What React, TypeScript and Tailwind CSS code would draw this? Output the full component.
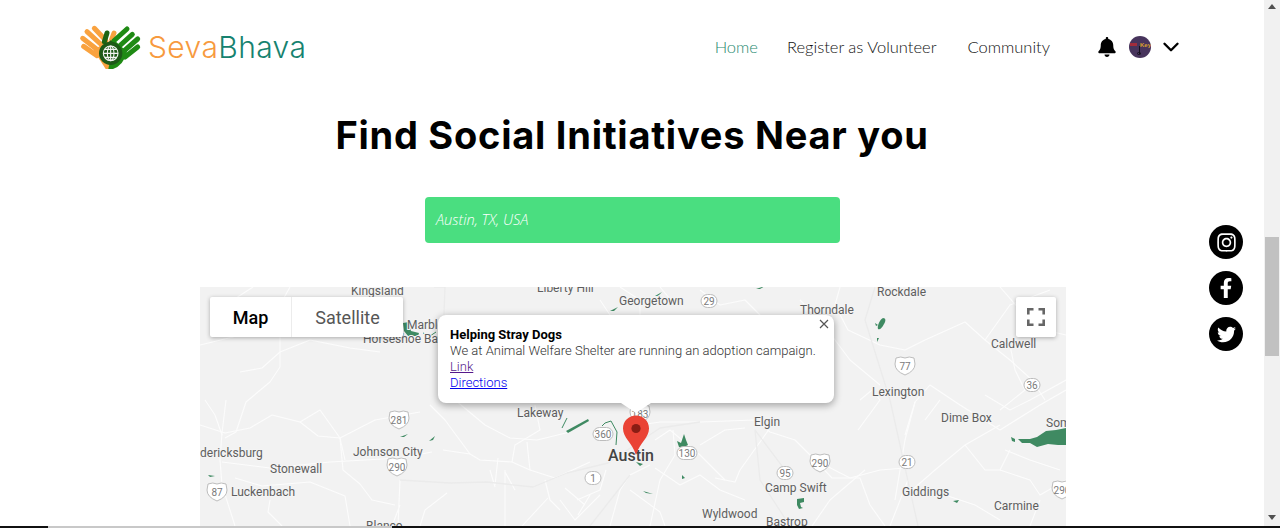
import React from "react";
import { FaInstagram, FaFacebookF, FaTwitter, FaBell } from "react-icons/fa";
import { ChevronDown } from "lucide-react";

function Logo() {
  const orange = "#f9a23f";
  const green = "#1f8a14";
  return (
    <svg width="70" height="50" viewBox="0 0 210 150" className="shrink-0 -ml-[6px] mr-[3px] -translate-y-[1px]">
      <g stroke={orange} strokeWidth="15" strokeLinecap="round" fill="none">
        <path d="M58 22 L92 58" />
        <path d="M36 32 L80 72" />
        <path d="M23 52 L72 90" />
        <path d="M26 76 L66 104" />
        <path d="M117 36 L110 55" />
      </g>
      <path d="M56 88 L100 58 L112 144 L92 144 Z" fill={orange} />
      <g stroke={green} strokeWidth="15" strokeLinecap="round" fill="none">
        <path d="M156 24 L116 60" />
        <path d="M172 40 L130 78" />
        <path d="M188 54 L142 94" />
        <path d="M188 78 L150 108" />
      </g>
      <path d="M156 92 L118 58 L100 144 L114 144 Q146 132 156 92 Z" fill={green} />
      <path d="M96 36 L88 62" stroke="#1e6414" strokeWidth="15" strokeLinecap="round" />
      <circle cx="107" cy="97" r="35" fill="#1e5a18" />
      <path d="M107 58 L82 78 L132 78 Z" fill="#1e5a18" />
      <g stroke="#f4f4f4" strokeWidth="3.4" fill="none">
        <circle cx="107" cy="97" r="22" />
        <ellipse cx="107" cy="97" rx="10" ry="22" />
        <path d="M107 75 V119 M85 97 H129 M89 85 H125 M89 109 H125" />
      </g>
    </svg>
  );
}

function Avatar() {
  return (
    <div className="relative ml-[12px] h-[22px] w-[22px] overflow-hidden rounded-full bg-[#47345c]">
      <span className="absolute left-[1px] top-[7px] h-[3px] w-[7px] bg-[#a12c3c]" />
      <span className="absolute left-[11px] top-[6px] font-['Liberation_Sans',sans-serif] text-[6px] font-bold leading-[7px] text-[#d9a02e]">
        Key
      </span>
      <span className="absolute left-[10px] top-[10px] h-[8px] w-[1px] bg-[#15101c]" />
      <span className="absolute left-[8px] top-[16px] h-[3px] w-[4px] rounded-full border border-[#15101c]" />
    </div>
  );
}

function Header() {
  return (
    <header className="flex h-[94px] shrink-0 items-center justify-between pl-[81px] pr-[80px]">
      <div className="flex items-center">
        <Logo />
        <span className="font-['Inter',sans-serif] text-[30px] font-light leading-none tracking-[0.4px]">
          <span className="text-[#f79a3e]">Seva</span>
          <span className="text-[#16826f]">Bhava</span>
        </span>
      </div>
      <nav className="flex items-center font-['Lato',sans-serif] text-[16.5px] font-light text-[#111]">
        <a className="text-[#1f8a70]">Home</a>
        <a className="ml-[29px]">Register as Volunteer</a>
        <a className="ml-[31px]">Community</a>
        <FaBell className="ml-[47px] text-[20px] text-black" />
        <Avatar />
        <ChevronDown className="ml-[7px] h-[26px] w-[26px] text-black" strokeWidth={2.2} />
      </nav>
    </header>
  );
}

const roads = [
  "M200 345 L233 337 L246 331 L262 318 L280 305 L290 287",
  "M233 300 L253 287",
  "M280 337 L280 367 L270 382 L246 402 L236 432 L225 438",
  "M240 372 L262 368 L280 352 L310 340 L350 348 L380 352",
  "M200 425 L225 433 L250 428 L272 415 L300 422 L320 410 L340 438 L345 460",
  "M226 400 L222 433 L220 460 L222 485 L235 526",
  "M205 400 L215 415 L222 435",
  "M300 422 L318 436 L340 438 L375 420 L420 412",
  "M340 438 L343 470 L360 484 L372 500 L395 505",
  "M222 462 L270 468 L330 462 L400 458 L432 452",
  "M235 478 L262 486 L310 482 L345 496 L350 526",
  "M270 500 L268 512 L282 526",
  "M400 505 L392 526 M400 480 L398 526",
  "M447 493 L425 510 L420 526",
  "M505 470 L505 526",
  "M545 480 L550 500 L560 510 M548 498 L522 526",
  "M565 488 L585 505 M578 515 L590 495",
  "M443 450 L470 454 L480 460 L512 462 L530 470 L555 478 L590 462",
  "M470 454 L445 420 L430 405",
  "M512 462 L515 445 L540 430 L535 405",
  "M530 470 L528 452 L527 442 M498 458 L495 485",
  "M455 400 L485 425 L510 438 L537 440 L570 432",
  "M490 470 L495 487 M505 472 L515 490",
  "M620 287 L640 300 L640 315 M660 287 L675 305",
  "M600 300 L612 318 M700 290 L720 305 L745 300 L760 315",
  "M840 287 L835 305 L848 330 L880 345 L905 350 L925 340",
  "M800 300 L820 320 L850 360 L880 385",
  "M925 340 L965 322 L985 340 L1010 360 L1032 380 L1045 400",
  "M1000 287 L1020 310 L1045 330 L1066 335",
  "M985 340 L1010 305 L1050 290",
  "M1010 345 L1015 370 L1025 390 L1000 410",
  "M985 395 L1010 410 L1030 400 L1066 380",
  "M640 425 L660 422 L700 422 L755 420 L770 432 L795 440 L815 460 L850 478 L880 470 L905 468",
  "M770 428 L740 470 L735 482 L715 478",
  "M655 440 L670 430 L700 455 L715 470 L725 480",
  "M700 445 L725 430 L745 428",
  "M655 468 L680 485 L700 475 L720 490 L745 500",
  "M673 430 L675 455 L660 480 L650 526",
  "M815 460 L832 478 L860 478 L870 505 L885 526",
  "M865 470 L830 500 L812 526",
  "M908 480 L890 526",
  "M905 435 L915 402 L930 385 L960 405 L1000 430 L1040 405 L1066 390",
  "M915 402 L905 440 L895 500",
  "M912 490 L935 470 L965 445 L1000 425",
  "M945 495 L975 505 L1000 520 M1000 470 L1030 480 L1040 495 L1066 480",
  "M1005 450 L1030 460 L1060 470",
  "M1040 500 L1030 526",
  "M965 445 L985 470 L1000 470 L1010 450",
  "M858 430 L880 400 L872 390 L860 400",
  "M925 420 L940 400",
  "M610 526 L620 490 L630 475 L650 465",
  "M577 500 L600 490 L606 470",
  "M630 490 L660 512 L665 526",
  "M560 500 L575 520 L600 495",
];

const highways = [
  "M400 480 L450 483 L487 482 L533 487 L567 473 L608 463 L660 428 L700 422",
  "M434 287 L445 287 L443 340 L445 400",
  "M875 287 L865 320 L890 400 L918 526",
  "M630 475 L590 526",
  "M785 470 L755 430 L760 480 L790 526",
];

const parks = [
  "M403 323 L409 322 L411 331 L419 333 L418 336 L408 336 L404 331 Z",
  "M883 318 C886 318 886 321 884 324 C882 328 880 330 878 329 C877 326 880 319 883 318 Z",
  "M875 323 L878 325 L876 326 Z",
  "M877 338 L879 338 L877 342 Z",
  "M1018 439 L1030 439 L1037 437 L1046 431 L1056 430 L1066 428 L1066 445 L1058 445 L1048 444 L1037 447 L1030 443 L1022 443 Z",
  "M1011 437 L1015 439 L1015 442 L1012 441 Z",
  "M677 441 L681 443 L684 434 L686 440 L688 445 L684 447 L679 447 Z",
  "M797 499 L804 498 L804 502 L800 503 L801 507 L803 508 L799 509 L797 505 Z",
  "M682 475 L685 478 L682 479 Z",
  "M953 501 L959 500 L957 503 Z",
  "M400 437 L408 434 L404 437 Z",
  "M429 441 L435 436 L433 440 Z",
  "M208 475 L215 476 L210 477 Z",
  "M643 491 L653 494 L646 493 Z",
  "M636 462 L643 464 L640 466 Z",
  "M566 431 L588 419 L589 421 L568 433 Z",
  "M655 296 L662 292 L658 296 Z",
  "M756 289 L765 286 L760 289 Z",
  "M610 311 L618 307 L614 311 Z",
];

const parkLines = [
  "M562 428 L567 418",
  "M602 426 L605 423 L611 421 L617 432 L616 445",
  "M423 333 L430 336 L436 332",
];

const labels: [string, number, number][] = [
  ["Kingsland", 351, 295],
  ["Liberty Hill", 537, 292],
  ["Georgetown", 619, 305],
  ["Thorndale", 800, 314],
  ["Rockdale", 877, 296],
  ["Caldwell", 991, 348],
  ["Lexington", 872, 396],
  ["Dime Box", 941, 422],
  ["Som", 1046, 427],
  ["Elgin", 754, 426],
  ["Camp Swift", 765, 492],
  ["Giddings", 902, 496],
  ["Carmine", 994, 510],
  ["Wyldwood", 702, 518],
  ["Bastrop", 766, 526],
  ["Lakeway", 517, 417],
  ["Johnson City", 353, 456],
  ["dericksburg", 200, 457],
  ["Stonewall", 270, 473],
  ["Luckenbach", 231, 496],
  ["Blanco", 366, 530],
  ["Marble", 407, 329],
  ["Horseshoe Bay", 363, 343],
];

const usShields: [string, number, number][] = [
  ["183", 640, 414],
  ["281", 399, 420],
  ["290", 397, 467],
  ["87", 217, 492],
  ["77", 905, 366],
  ["290", 820, 463],
  ["290", 1062, 490],
];

const pills: [string, number, number, number][] = [
  ["29", 709, 301, 16],
  ["36", 1032, 385, 16],
  ["130", 687, 453, 20],
  ["95", 785, 473, 16],
  ["21", 907, 462, 16],
  ["360", 603, 434, 20],
  ["1", 593, 478, 16],
];

function MapCanvas() {
  return (
    <svg viewBox="200 287 866 239" className="block h-full w-full font-['Roboto',sans-serif]">
      <g fill="none" stroke="#fcfcfc" strokeWidth="1.1" strokeLinejoin="round">
        {roads.map((d, i) => (
          <path key={i} d={d} />
        ))}
      </g>
      <g fill="none" stroke="#ebebeb" strokeWidth="1.3" strokeLinejoin="round">
        {highways.map((d, i) => (
          <path key={i} d={d} />
        ))}
      </g>
      <g fill="#3f8a62">
        {parks.map((d, i) => (
          <path key={i} d={d} />
        ))}
      </g>
      <g fill="none" stroke="#3f8a62" strokeWidth="1">
        {parkLines.map((d, i) => (
          <path key={i} d={d} />
        ))}
      </g>
      {labels.map(([t, x, y]) => (
        <text key={t} x={x} y={y} fontSize="12" fill="#5e5e5e" stroke="#f4f4f4" strokeWidth="2" className="[paint-order:stroke]">
          {t}
        </text>
      ))}
      <text x="608" y="461" fontSize="16" fontWeight="500" fill="#444" stroke="#f4f4f4" strokeWidth="2" className="[paint-order:stroke]">
        Austin
      </text>
      {usShields.map(([t, x, y]) => (
        <g key={t + x} transform={`translate(${x} ${y})`}>
          <path d="M-9 -8 Q-4 -10 0 -8 Q4 -10 9 -8 L10 -2 Q10 5 0 9 Q-10 5 -10 -2 Z" fill="#fff" stroke="#bdbdbd" strokeWidth="1" />
          <text textAnchor="middle" y="3.5" fontSize="10" fill="#7a7a7a">
            {t}
          </text>
        </g>
      ))}
      {pills.map(([t, x, y, w]) => (
        <g key={t}>
          <rect x={x - w / 2} y={y - 6.5} width={w} height="13" rx="6.5" fill="#fff" stroke="#bdbdbd" strokeWidth="1" />
          <text x={x} y={y + 3.5} textAnchor="middle" fontSize="10" fill="#7a7a7a">
            {t}
          </text>
        </g>
      ))}
      <path d="M636 415.5 C628.8 415.5 623 421 623 428.5 C623 438 632 442 636 455 C640 442 649 438 649 428.5 C649 421 643.2 415.5 636 415.5 Z" fill="#ea4335" />
      <circle cx="636" cy="428.5" r="4.6" fill="#8a1d14" />
    </svg>
  );
}

function MapTabs() {
  return (
    <div className="absolute left-[10px] top-[10px] flex h-[40px] rounded-[2px] bg-white font-['Roboto',sans-serif] text-[18px] shadow-[0_1px_4px_rgba(0,0,0,0.3)]">
      <div className="flex w-[82px] items-center justify-center border-r border-[#ececec] font-medium text-black">Map</div>
      <div className="flex w-[111px] items-center justify-center text-[#565656]">Satellite</div>
    </div>
  );
}

function FullscreenButton() {
  return (
    <div className="absolute right-[10px] top-[10px] flex h-[40px] w-[40px] items-center justify-center rounded-[2px] bg-white shadow-[0_1px_4px_rgba(0,0,0,0.3)]">
      <svg width="18" height="18" viewBox="0 0 18 18" fill="none" stroke="#666" strokeWidth="2.6">
        <path d="M1.3 6.5V1.3H6.5 M11.5 1.3H16.7V6.5 M16.7 11.5V16.7H11.5 M6.5 16.7H1.3V11.5" />
      </svg>
    </div>
  );
}

function InfoWindow() {
  return (
    <div className="absolute left-[238px] top-[28px] h-[88px] w-[396px] rounded-[8px] bg-white pl-[12px] pt-[12px] font-['Roboto',sans-serif] text-[13px] leading-[16px] shadow-[0_2px_7px_1px_rgba(0,0,0,0.3)]">
      <div className="font-bold text-black">Helping Stray Dogs</div>
      <div className="whitespace-nowrap font-light text-[#333]">We at Animal Welfare Shelter are running an adoption campaign.</div>
      <a className="block font-light text-[#551a8b] underline">Link</a>
      <a className="block font-light text-[#0000ee] underline">Directions</a>
      <svg width="10" height="10" viewBox="0 0 10 10" className="absolute right-[5px] top-[4px]" stroke="#555" strokeWidth="1.2">
        <path d="M1 1 L9 9 M9 1 L1 9" />
      </svg>
      <svg width="30" height="10" viewBox="0 0 30 10" className="absolute left-[183px] top-[88px]">
        <path d="M0 0 H30 L15 10 Z" fill="#fff" />
      </svg>
    </div>
  );
}

function Scrollbar() {
  return (
    <div className="flex w-[16px] shrink-0 flex-col items-center bg-[#f1f1f1]">
      <svg width="8" height="5" viewBox="0 0 8 5" className="mt-[4px]">
        <path d="M4 0 L8 5 H0 Z" fill="#505050" />
      </svg>
      <div className="mt-[228px] h-[119px] w-[14px] bg-[#c1c1c1]" />
      <svg width="8" height="5" viewBox="0 0 8 5" className="mt-[159px]">
        <path d="M4 5 L8 0 H0 Z" fill="#505050" />
      </svg>
    </div>
  );
}

function Social() {
  return (
    <div className="absolute left-[1209px] top-[225px] flex flex-col gap-[12px] text-white">
      <div className="flex h-[34px] w-[34px] items-center justify-center rounded-full bg-black">
        <FaInstagram className="text-[21px]" />
      </div>
      <div className="flex h-[34px] w-[34px] items-center justify-center rounded-full bg-black">
        <FaFacebookF className="text-[20px]" />
      </div>
      <div className="flex h-[34px] w-[34px] items-center justify-center rounded-full bg-black">
        <FaTwitter className="text-[19px]" />
      </div>
    </div>
  );
}

export default function App() {
  return (
    <div className="relative flex h-[528px] w-[1280px] flex-col overflow-hidden bg-white">
      <div className="flex min-h-0 flex-1">
        <main className="flex w-[1264px] shrink-0 flex-col">
          <Header />
          <h1 className="mt-[19px] text-center font-['Inter',sans-serif] text-[38px] font-bold leading-[44px] tracking-[0.75px] text-black">
            Find Social Initiatives Near you
          </h1>
          <div className="ml-[425px] mt-[40px] flex h-[46px] w-[415px] shrink-0 items-center rounded-[4px] bg-[#4ade80] pl-[11px] font-['Open_Sans',sans-serif] text-[14.6px] font-light italic text-white">
            Austin, TX, USA
          </div>
          <div className="relative ml-[200px] mt-[44px] min-h-0 w-[866px] flex-1 overflow-hidden bg-[#f2f2f2]">
            <MapCanvas />
            <MapTabs />
            <FullscreenButton />
            <InfoWindow />
          </div>
        </main>
        <Scrollbar />
      </div>
      <div className="flex h-[2px] shrink-0">
        <div className="w-[48px] bg-[#111]" />
        <div className="w-[344px] bg-[#c8c8c8]" />
        <div className="flex-1 bg-[#111]" />
      </div>
      <Social />
    </div>
  );
}
